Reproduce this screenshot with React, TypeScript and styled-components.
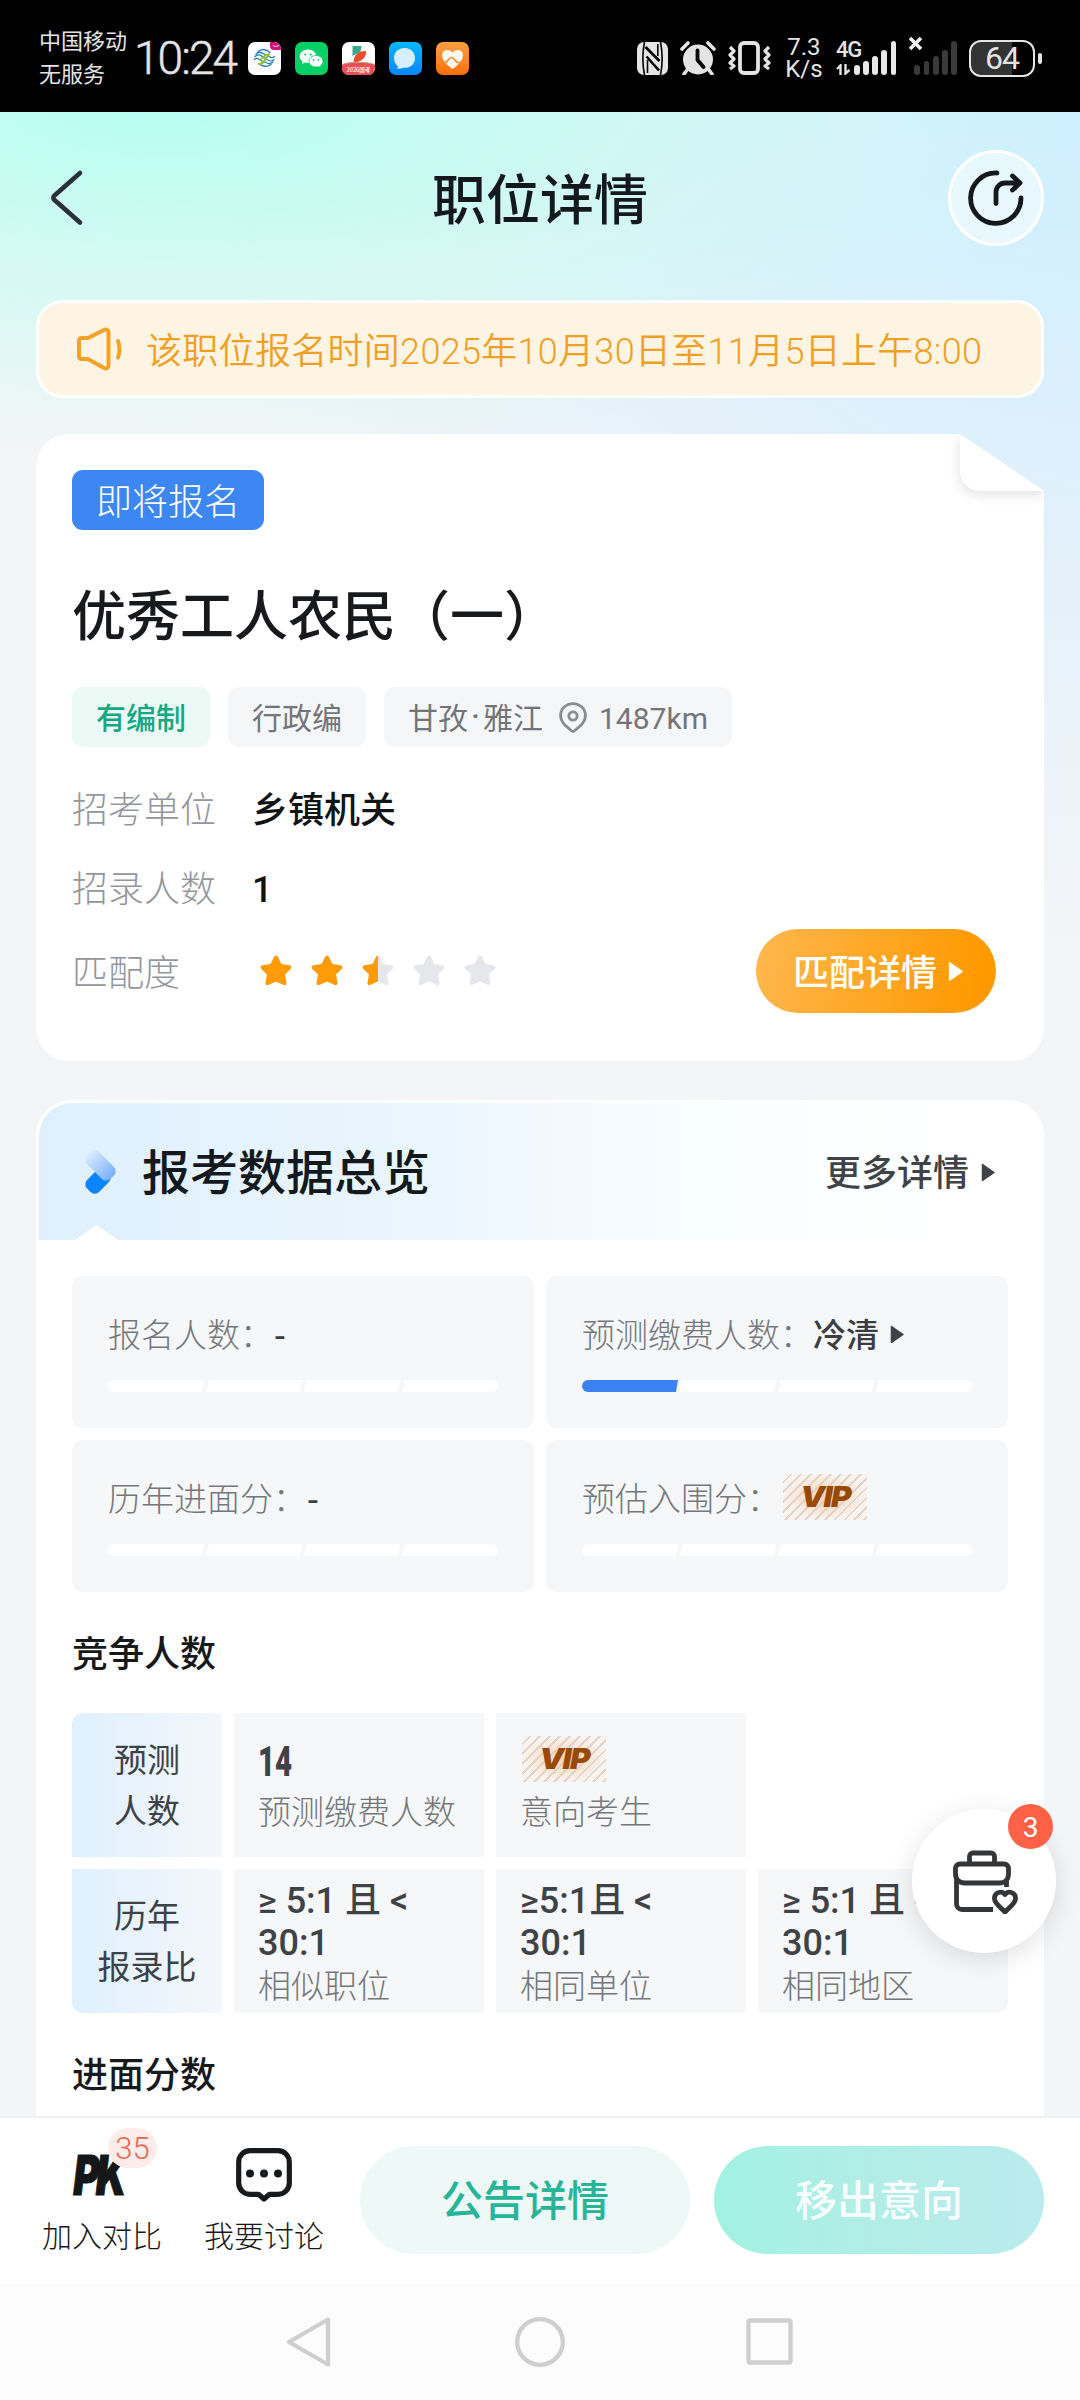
import React from 'react';
import styled, { createGlobalStyle, css } from 'styled-components';

const GlobalStyle = createGlobalStyle`
  * { box-sizing: border-box; }
  html, body { margin: 0; padding: 0; }
  body {
    font-family: 'Noto Sans CJK SC', 'Noto Sans', sans-serif;
    color: #17191c;
    -webkit-font-smoothing: antialiased;
  }
  svg { display: block; flex: none; }
`;

/* Latin letters, digits and signs inside Chinese text */
const Latin = styled.span`
  font-family: Roboto, 'Noto Sans CJK SC', sans-serif;
  line-height: 0;
`;

const Mixed = ({ children }: { children: string }) => (
  <span>
    {children.split(/([\x21-\x7e≥ ]+)/).map((part, i) =>
      i % 2 ? <Latin key={i}>{part}</Latin> : part,
    )}
  </span>
);

const Screen = styled.div`
  position: relative;
  width: 1080px;
  height: 2400px;
  display: flex;
  flex-direction: column;
  overflow: hidden;
  background: #f4f5f7;
`;

/* ---------- status bar ---------- */

const StatusBar = styled.header`
  flex: none;
  height: 112px;
  padding: 4px 38px 0 39px;
  display: flex;
  align-items: center;
  background: #000;
  color: #e4e4e4;
`;

const Carrier = styled.div`
  font-size: 22px;
  line-height: 33px;
  width: 88px;
  padding-bottom: 4px;
  white-space: nowrap;
`;

const Clock = styled.div`
  width: 103px;
  margin-left: 7px;
  font-family: Roboto, sans-serif;
  font-size: 46px;
  font-weight: 300;
  letter-spacing: -1.9px;
  line-height: 60px;
  white-space: nowrap;
  -webkit-text-stroke: 0.5px #e4e4e4;
`;

const AppIcons = styled.div`
  display: flex;
  gap: 14px;
  margin-left: 11px;
`;

const StatusIcons = styled.div`
  margin-left: auto;
  display: flex;
  align-items: center;
`;

const Spacer = styled.i`
  width: 12px;
`;

const Speed = styled.div`
  width: 36px;
  margin: 0 14px 0 15px;
  display: flex;
  flex-direction: column;
  align-items: center;
  font-family: Roboto, sans-serif;
  font-size: 24px;
  line-height: 22px;
  font-weight: 400;
  white-space: nowrap;
`;

const Network = styled.div`
  display: flex;
  flex-direction: column;
  width: 18px;
  height: 34px;
  font-family: Roboto, sans-serif;
  font-size: 22px;
  line-height: 18px;
  font-weight: 500;
  letter-spacing: -1.2px;
  white-space: nowrap;
  justify-content: space-between;
`;

const Bars = styled.div<{ $dim?: boolean }>`
  display: flex;
  align-items: flex-end;
  gap: 3.4px;
  height: 34px;
  opacity: ${(p) => (p.$dim ? 0.25 : 1)};
`;

const Bar = styled.i<{ $h: number }>`
  width: 5.8px;
  height: ${(p) => p.$h}px;
  border-radius: 3px;
  background: #e8e8e8;
`;

const Battery = styled.div`
  width: 66px;
  height: 37px;
  margin-left: 12px;
  border: 2.5px solid #e4e4e4;
  border-radius: 12px;
  display: flex;
  align-items: center;
  justify-content: center;
  font-family: Roboto, sans-serif;
  font-size: 32px;
  line-height: 30px;
  letter-spacing: -1px;
  background: linear-gradient(90deg, #333 66%, #000 66%);
`;

const BatteryNub = styled.i`
  width: 4px;
  height: 11px;
  margin-left: 3px;
  border-radius: 2px;
  background: #e4e4e4;
`;

/* ---------- scroll area ---------- */

const Content = styled.main`
  flex: none;
  height: 2004px;
  overflow: hidden;
  padding: 0 36px;
  background:
    radial-gradient(ellipse 950px 370px at 160px -20px, rgba(176, 255, 241, 0.95), rgba(200, 251, 241, 0.7) 50%, rgba(232, 248, 246, 0) 100%),
    radial-gradient(ellipse 900px 900px at 1080px -40px, rgba(203, 239, 255, 1), rgba(221, 239, 252, 0.8) 50%, rgba(244, 245, 247, 0) 100%),
    #f4f5f7;
`;

const TitleBar = styled.div`
  height: 188px;
  padding: 38px 0 54px;
  display: grid;
  grid-template-columns: 96px 1fr 96px;
  align-items: center;
`;

const BackButton = styled.button`
  border: 0;
  padding: 0 0 0 13px;
  background: none;
`;

const PageTitle = styled.h1`
  margin: 0;
  padding-bottom: 2px;
  text-align: center;
  font-size: 54px;
  line-height: 80px;
  font-weight: 500;
  color: #14191d;
  white-space: nowrap;
`;

const ShareButton = styled.button`
  width: 96px;
  height: 96px;
  padding: 0;
  border: 3px solid #fff;
  border-radius: 50%;
  background: rgba(255, 255, 255, 0.5);
  display: flex;
  align-items: center;
  justify-content: center;
`;

const Notice = styled.div`
  height: 98px;
  padding-left: 36px;
  display: flex;
  align-items: center;
  border: 3px solid #fff;
  border-radius: 27px;
  background: #fef4e3;
  color: #efa023;
  font-size: 36px;
  font-weight: 350;
`;

const NoticeText = styled.span`
  margin-left: 23px;
  padding-bottom: 3px;
  line-height: 50px;
  letter-spacing: 0.3px;
  white-space: nowrap;
`;

const JobCard = styled.section`
  position: relative;
  height: 627px;
  margin-top: 36px;
  padding: 36px 36px 0;
  border-radius: 33px;
  background: #fff;
  clip-path: polygon(0 0, calc(100% - 84px) 0, 100% 57px, 100% 100%, 0 100%);
`;

const Fold = styled.div`
  position: absolute;
  top: 0;
  right: 0;
  width: 84px;
  height: 57px;
  border-radius: 0 0 0 20px;
  background: #fff;
  box-shadow: -1px 5px 12px rgba(0, 0, 0, 0.1);
`;

const StatusTag = styled.div`
  width: 192px;
  height: 60px;
  border-radius: 11px;
  background: #3d87f3;
  color: #fff;
  font-size: 36px;
  font-weight: 300;
  line-height: 58px;
  text-align: center;
`;

const JobTitle = styled.h2`
  margin: 47px 0 38px;
  font-size: 54px;
  line-height: 72px;
  height: 72px;
  font-weight: 500;
  white-space: nowrap;
`;

const Tags = styled.div`
  display: flex;
  gap: 18px;
`;

const Tag = styled.div<{ $accent?: boolean }>`
  height: 60px;
  padding: 0 24px 3px;
  display: flex;
  align-items: center;
  border-radius: 11px;
  background: ${(p) => (p.$accent ? '#ecfaf6' : '#f5f6f8')};
  color: ${(p) => (p.$accent ? '#16a884' : '#727579')};
  font-size: 30px;
  font-weight: ${(p) => (p.$accent ? 500 : 400)};
  line-height: 56px;
  white-space: nowrap;
  svg { margin: 4px 12px 0 16px; }
`;

const Dot = styled.span`
  width: 15px;
  text-align: center;
  font-family: Roboto, sans-serif;
  font-weight: 500;
`;

const Fields = styled.dl`
  margin: 22px 0 0;
`;

const Field = styled.div<{ $last?: boolean }>`
  height: ${(p) => (p.$last ? 84 : 79)}px;
  ${(p) => p.$last && css`margin-top: 2px;`}
  display: flex;
  align-items: center;
`;

const FieldName = styled.dt`
  width: 180px;
  font-size: 36px;
  line-height: 50px;
  font-weight: 300;
  color: #94969d;
  padding-bottom: 3px;
`;

const FieldValue = styled.dd`
  margin: 0;
  font-size: 36px;
  line-height: 50px;
  font-weight: 500;
  color: #111315;
  padding-bottom: 3px;
`;

const Stars = styled.dd`
  margin: 0;
  display: flex;
  gap: 15px;
  padding-left: 6px;
  padding-bottom: 2px;
`;

const MatchButton = styled.button`
  width: 240px;
  height: 84px;
  margin: 0 12px 0 auto;
  padding: 0 0 2px 37px;
  display: flex;
  align-items: center;
  gap: 11px;
  border: 0;
  border-radius: 42px;
  background: linear-gradient(100deg, #ffb74e 0%, #ff9900 92%);
  color: #fff;
  font: inherit;
  font-size: 36px;
  font-weight: 500;
  white-space: nowrap;
  svg { margin-top: 2px; }
`;

const DataCard = styled.section`
  height: 1100px;
  margin-top: 39px;
  border: 3px solid #fff;
  border-radius: 36px;
  background: #fff;
  overflow: hidden;
`;

const DataHeader = styled.div`
  position: relative;
  height: 137px;
  padding: 0 46px 0 41px;
  display: flex;
  align-items: center;
  background: linear-gradient(90deg, #dff0fd 0%, #e9f5fe 35%, #f2f9ff 52%, #fafeff 70%, #fff 92%);
`;

const Notch = styled.i`
  position: absolute;
  left: 36px;
  bottom: 0;
  width: 43px;
  height: 15px;
  background: #fff;
  clip-path: polygon(50% 0, 100% 100%, 0 100%);
`;

const DataTitle = styled.h3`
  flex: 1;
  margin: 0 0 0 22px;
  font-size: 48px;
  line-height: 70px;
  font-weight: 500;
  padding-bottom: 5px;
  color: #14191d;
`;

const More = styled.a`
  display: flex;
  align-items: center;
  gap: 12px;
  font-size: 36px;
  line-height: 50px;
  font-weight: 500;
  color: #3f4347;
  padding-bottom: 3px;
  svg { margin-top: 5px; }
`;

const DataBody = styled.div`
  padding: 36px 33px 0;
`;

const StatGrid = styled.div`
  display: grid;
  grid-template-columns: 462px 462px;
  grid-auto-rows: 152px;
  gap: 12px;
`;

const Stat = styled.div`
  padding: 32px 36px 0;
  border-radius: 11px;
  background: #f6f7f9;
`;

const StatLine = styled.div`
  display: flex;
  align-items: center;
  height: 50px;
  font-size: 33px;
  line-height: 48px;
  font-weight: 300;
  color: #75777b;
  white-space: nowrap;
  svg { margin: 3px 0 0 11px; }
`;

const StatValue = styled.b<{ $empty?: boolean }>`
  font-weight: 500;
  color: #3a3e42;
  ${(p) => p.$empty && css`margin-left: 1px;`}
`;

const Progress = styled.div`
  display: grid;
  grid-template-columns: repeat(4, 96px);
  gap: 2px;
  height: 12px;
  margin-top: 22px;
  border-radius: 6px;
  overflow: hidden;
`;

const Segment = styled.i<{ $on?: boolean }>`
  background: ${(p) => (p.$on ? '#3c82f5' : '#fff')};
  clip-path: polygon(3px 0, 100% 0, calc(100% - 2px) 100%, 0 100%);
  &:first-child { clip-path: polygon(0 0, 100% 0, calc(100% - 2px) 100%, 0 100%); }
  &:last-child { clip-path: polygon(3px 0, 100% 0, 100% 100%, 0 100%); }
`;

const VipMark = styled.div<{ $indent?: number }>`
  width: 84px;
  height: 46px;
  margin-left: ${(p) => p.$indent ?? 0}px;
  display: flex;
  align-items: center;
  justify-content: center;
  background:
    radial-gradient(ellipse at center, rgba(243, 200, 165, 0.75), rgba(250, 238, 228, 0.15) 70%),
    repeating-linear-gradient(135deg, #f8f5f3 0 5px, #e3d0c3 5px 7px);
`;

const VipText = styled.span`
  font-family: Inter, Roboto, sans-serif;
  font-size: 29px;
  line-height: 30px;
  font-weight: 900;
  font-style: italic;
  letter-spacing: -1.5px;
  color: #984a05;
  transform: scaleX(1.08);
`;

const SectionTitle = styled.h4`
  margin: 34px 0 33px;
  height: 54px;
  font-size: 36px;
  line-height: 50px;
  font-weight: 500;
`;

const CompareGrid = styled.div`
  display: grid;
  grid-template-columns: 150px 250px 250px 250px;
  grid-auto-rows: 144px;
  gap: 12px;
  border-radius: 11px;
  overflow: hidden;
`;

const RowHead = styled.div`
  display: flex;
  flex-direction: column;
  align-items: center;
  justify-content: center;
  padding-bottom: 3px;
  font-size: 33px;
  line-height: 51px;
  color: #3d4247;
  background: linear-gradient(90deg, #dff0fe 0%, #f4f7fb 100%);
`;

const Cell = styled.div`
  display: flex;
  flex-direction: column;
  justify-content: center;
  padding: 0 10px 0 24px;
  background: #f6f7f9;
`;

const CellNumber = styled.div`
  height: 46px;
  margin-bottom: 4px;
  font-family: Roboto, sans-serif;
  font-size: 42px;
  line-height: 52px;
  font-weight: 900;
  color: #3f4347;
  transform: scaleX(0.7);
  transform-origin: left;
`;

const CellRatio = styled.div`
  margin-top: 2px;
  font-size: 36px;
  line-height: 42px;
  font-weight: 500;
  color: #3f4347;
  white-space: nowrap;
`;

const CellLabel = styled.div<{ $raised?: boolean }>`
  font-size: 33px;
  line-height: 48px;
  font-weight: 300;
  color: #75777b;
  white-space: nowrap;
  ${(p) => p.$raised && css`margin-top: 4px;`}
`;

/* ---------- floating button ---------- */

const Fab = styled.button`
  position: absolute;
  left: 912px;
  top: 1809px;
  width: 144px;
  height: 144px;
  padding: 2px 0 0 3px;
  border: 0;
  border-radius: 50%;
  background: #fff;
  box-shadow: 0 6px 28px rgba(0, 0, 0, 0.12);
  display: flex;
  align-items: center;
  justify-content: center;
`;

const FabBadge = styled.span`
  position: absolute;
  top: -5px;
  left: 96px;
  width: 45px;
  height: 45px;
  border-radius: 50%;
  background: #ff6146;
  color: #fff;
  font: 400 28px/47px Roboto, sans-serif;
  text-align: center;
`;

/* ---------- bottom ---------- */

const ActionBar = styled.footer`
  flex: none;
  height: 168px;
  padding: 28px 36px 0 42px;
  display: flex;
  align-items: flex-start;
  border-top: 2px solid #f0f1f3;
  background: #fff;
`;

const Action = styled.div`
  position: relative;
  width: 120px;
  margin-right: 42px;
  display: flex;
  flex-direction: column;
  align-items: center;
  font-size: 30px;
  font-weight: 300;
`;

const ActionIcon = styled.div`
  height: 58px;
  width: 100%;
  display: flex;
  align-items: center;
  justify-content: center;
`;

const ActionLabel = styled.span`
  margin-top: 10px;
  line-height: 40px;
  white-space: nowrap;
`;

const PkMark = styled.span`
  font-family: Inter, Roboto, sans-serif;
  font-size: 55px;
  line-height: 58px;
  font-weight: 900;
  font-style: italic;
  letter-spacing: -5px;
  color: #141617;
  transform: translateX(-4px) scaleX(0.73);
  -webkit-text-stroke: 1px #141617;
`;

const PkBadge = styled.span`
  position: absolute;
  left: 66px;
  top: -18px;
  width: 49px;
  height: 40px;
  border-radius: 20px;
  background: #fdecea;
  color: #e5694f;
  font-family: Roboto, sans-serif;
  font-size: 31px;
  line-height: 42px;
  text-align: center;
`;

const PillButton = styled.button<{ $primary?: boolean }>`
  width: 330px;
  height: 108px;
  margin-left: ${(p) => (p.$primary ? 24 : -6)}px;
  padding: 0 0 5px;
  border: 0;
  border-radius: 54px;
  font: inherit;
  font-size: 42px;
  font-weight: 500;
  ${(p) =>
    p.$primary
      ? css`
          color: rgba(255, 255, 255, 0.92);
          background: linear-gradient(90deg, #a2f1e3, #b2ede6 50%, #bbebee);
        `
      : css`
          color: #27b598;
          background: #eef9f7;
        `}
`;

const NavBar = styled.nav`
  flex: 1;
  display: flex;
  align-items: center;
  justify-content: center;
  gap: 180px;
  background: #fcfcfc;
`;

/* ---------- icons ---------- */

const Triangle = ({ color, w = 14, h = 19 }: { color: string; w?: number; h?: number }) => (
  <svg width={w} height={h} viewBox="0 0 14 19">
    <path d="M1.5 1.5v16L13 9.5z" fill={color} stroke={color} strokeWidth="1.5" strokeLinejoin="round" />
  </svg>
);

const STAR =
  'M17 1.500c1 0 1.600.8 2 1.600l3.400 6.900 7.900 1.200c2.200.4 2.900 2.200 1.400 3.800l-5.700 5.500 1.400 7.700c.4 2.200-1 3.600-3 2.600L17 27.500l-7.400 3.300c-2 1-3.400-.4-3-2.600L8 20.500 2.300 15c-1.500-1.600-.8-3.400 1.400-3.800l7.900-1.200L15 3.100c.4-.8 1-1.600 2-1.600z';

const Star = ({ fill }: { fill: number }) => (
  <svg width="36" height="34" viewBox="-1 -1 36 34">
    <path d={STAR} fill="#e6e7ea" />
    {fill > 0 && <path d={STAR} fill="#ff9b06" style={{ clipPath: `inset(0 ${100 - fill * 100}% 0 0)` }} />}
  </svg>
);

const MobileApp = () => (
  <svg width="33" height="33" viewBox="0 0 33 33">
    <rect width="33" height="33" rx="7" fill="#fff" />
    <path d="M22 0h4a7 7 0 0 1 7 7v1h-7a4 4 0 0 1-4-4z" fill="#d3107c" />
    <path d="M25 3c1 2 4 2 6 0" stroke="#fff" fill="none" />
    <g fill="none" strokeWidth="1.3" strokeLinecap="round">
      <path d="M10 9.500c4-3 9-2 12 1M8 12c4-4 7 0 10 1M7 14.500c4-4 7 0 9 1.500M6.500 17.500c3-3 5 0 7 1.500" stroke="#1f7fb6" />
      <path d="M23 22.500c-4 3-9 2-12-1M25 20c-4 4-7 0-10-1M26 17.500c-4 4-7 0-9-1.500M26.500 14.500c-3 3-5 0-7-1.500" stroke="#1f7fb6" />
      <path d="M11 22c5 1 5-5 9-8" stroke="#8cc21f" strokeWidth="2" />
      <path d="M12.500 17.500c3-1 4-6 9-5.500" stroke="#8cc21f" strokeWidth="1.500" />
    </g>
  </svg>
);

const WeChatApp = () => (
  <svg width="33" height="33" viewBox="0 0 33 33">
    <rect width="33" height="33" rx="7" fill="#06cf63" />
    <path d="M13 7.500c-4.800 0-8.300 3-8.300 6.800 0 2.100 1.100 3.900 2.900 5.200l-.8 2.600 3.100-1.600c1 .3 2 .5 3.100.5 4.800 0 8.400-3 8.400-6.700s-3.600-6.800-8.400-6.800z" fill="#fff" />
    <path d="M21 13.500c-4 0-7 2.600-7 5.800s3 5.700 7 5.700c.9 0 1.700-.1 2.500-.4l2.600 1.400-.7-2.200c1.600-1.100 2.600-2.700 2.600-4.500 0-3.200-3-5.800-7-5.800z" fill="#fff" stroke="#06cf63" strokeWidth="0.800" />
    <g fill="#06cf63">
      <circle cx="10.300" cy="12.500" r="1.100" /><circle cx="15.800" cy="12.500" r="1.100" />
      <circle cx="18.700" cy="17.800" r="0.900" /><circle cx="23.300" cy="17.800" r="0.900" />
    </g>
  </svg>
);

const ExamApp = () => (
  <svg width="33" height="33" viewBox="0 0 33 33">
    <defs><clipPath id="examClip"><rect width="33" height="33" rx="7" /></clipPath></defs>
    <g clipPath="url(#examClip)">
      <rect width="33" height="33" fill="#fff" />
      <path d="M10.500 4h9l-1 6-8 4z" fill="#3aa98d" />
      <path d="M24 9c.6 6-4 11-12.500 12C11.500 13 16 9 24 9z" fill="#ef4a2b" />
      <path d="M0 22.500c8-3 24-3 33 0V33H0z" fill="#ee4d55" />
      <path d="M0 22.500c8-3 24-3 33 0" stroke="#b9a693" fill="none" />
      <text x="16.500" y="30.300" textAnchor="middle" fontSize="5.600" fontWeight="500" fill="#fff">2026国考</text>
    </g>
  </svg>
);

const MessageApp = () => (
  <svg width="33" height="33" viewBox="0 0 33 33">
    <defs><linearGradient id="msg" x1="0" y1="0" x2="0" y2="1"><stop stopColor="#06b7ff" /><stop offset="1" stopColor="#0a86ff" /></linearGradient></defs>
    <rect width="33" height="33" rx="7" fill="url(#msg)" />
    <path d="M15.500 6C9.500 6 5 10.300 5 16c0 3.600 1.600 6.400 4 8.200l-1 2.600c3 .3 5-.6 6.500-1C21.500 26.500 26 22 26 16c0-5.700-4.500-10-10.500-10z" fill="#d6eeff" />
  </svg>
);

const HealthApp = () => (
  <svg width="33" height="33" viewBox="0 0 33 33">
    <defs><linearGradient id="hl" x1="0" y1="0" x2="0" y2="1"><stop stopColor="#ff9f43" /><stop offset="1" stopColor="#fb6f0a" /></linearGradient></defs>
    <rect width="33" height="33" rx="7" fill="url(#hl)" />
    <path d="M16.500 10.500C14 6.500 6 7 6 13.500c0 5.500 6 10 10.500 13.500C21 23.500 27 19 27 13.500 27 7 19 6.500 16.500 10.500z" fill="#fff8ee" />
    <path d="M0 20.500h9c3 0 3.500-5 6.500-5s3.500 5 6.500 5h11" fill="none" stroke="#f98a2a" strokeWidth="1.600" />
  </svg>
);

const Nfc = () => (
  <svg width="31" height="33" viewBox="0 0 31 33">
    <rect width="31" height="33" rx="7" fill="#e4e4e4" />
    <path d="M7.500 0C5.500 10 5.500 23 7.500 33M23.500 0c2 10 2 23 0 33" stroke="#000" strokeWidth="1.600" fill="none" />
    <path d="M8.500 5l14 14M9.500 14.500l12.500 14" stroke="#000" strokeWidth="2.600" />
    <path d="M10.500 18v13M20.800 2v12" stroke="#000" strokeWidth="1.600" />
  </svg>
);

const Alarm = () => (
  <svg width="36" height="34" viewBox="0 0 36 34">
    <circle cx="18" cy="18.500" r="15" fill="#e4e4e4" />
    <path d="M2 8l6-6M34 8l-6-6M7 29l-3 4M29 29l3 4" stroke="#e4e4e4" strokeWidth="3.600" strokeLinecap="round" />
    <path d="M17.500 9.500v9.500l6 7" stroke="#000" strokeWidth="3.800" fill="none" strokeLinecap="round" strokeLinejoin="round" />
  </svg>
);

const Vibrate = () => (
  <svg width="43" height="34" viewBox="0 0 43 34">
    <rect x="12" y="2" width="18" height="30" rx="4" fill="none" stroke="#e4e4e4" strokeWidth="3.800" />
    <path d="M2 6l4 4-4 4 4 4-4 4 4 3-4 3M41 6l-4 4 4 4-4 4 4 4-4 3 4 3" fill="none" stroke="#e4e4e4" strokeWidth="3.200" strokeLinejoin="round" />
  </svg>
);

const DataArrows = () => (
  <svg width="15" height="11" viewBox="0 0 15 11">
    <path d="M4.500 11V1.500L1 5M9.500 0v9.500L13.500 6" fill="none" stroke="#e4e4e4" strokeWidth="2.400" />
  </svg>
);

const NoSim = () => (
  <svg width="15" height="15" viewBox="0 0 15 15">
    <path d="M2 2l11 11M13 2L2 13" stroke="#f0f0f0" strokeWidth="3.600" />
  </svg>
);

const NoSimSlot = styled.div`
  align-self: flex-start;
  width: 6px;
  margin-left: 12px;
`;

const BackIcon = () => (
  <svg width="36" height="60" viewBox="0 0 36 60">
    <path d="M31 5L5.500 27.500c-1.500 1.400-1.500 3.200 0 4.600L31 54.500" fill="none" stroke="#2b3034" strokeWidth="4.600" strokeLinecap="round" strokeLinejoin="round" />
  </svg>
);

const ShareIcon = () => (
  <svg width="60" height="60" viewBox="0 0 60 60">
    <g fill="none" stroke="#14191d" strokeWidth="4.800" strokeLinecap="round" strokeLinejoin="round">
      <path d="M31 5A25.200 25.200 0 1 0 55 30" />
      <path d="M30 35.500V24a9 9 0 0 1 9-9h14M46.500 8l7.500 7-7.500 7" />
    </g>
  </svg>
);

const Speaker = () => (
  <svg width="48" height="46" viewBox="0 0 48 46">
    <g fill="none" stroke="#f5a128" strokeWidth="4" strokeLinejoin="round" strokeLinecap="round">
      <path d="M4 14.500A2.500 2.500 0 0 1 6.500 12H13L29 4c2.500-1 4.500 0 4.500 2.500v33c0 2.500-2 3.500-4.500 2.500L13 33H6.500A2.500 2.500 0 0 1 4 30.500z" />
      <path d="M43 15c2 4.500 2 12 0 16.500" />
    </g>
  </svg>
);

const Pin = () => (
  <svg width="28" height="31" viewBox="0 0 28 31">
    <path d="M14 1.600C7 1.600 1.600 6.900 1.600 13.500c0 4.200 2.200 7.600 5.200 10.400l5.700 4.900a2.300 2.300 0 0 0 3 0l5.700-4.900c3-2.800 5.200-6.200 5.200-10.400C26.400 6.900 21 1.600 14 1.600z" fill="none" stroke="#898c92" strokeWidth="2.800" />
    <circle cx="14" cy="14" r="4.200" fill="none" stroke="#898c92" strokeWidth="2.800" />
  </svg>
);

const ChevronMark = () => (
  <svg width="40" height="52" viewBox="0 0 40 52">
    <defs>
      <linearGradient id="cm" x1="0" y1="0" x2="1" y2="0"><stop stopColor="#dcecfe" /><stop offset="1" stopColor="#78affa" /></linearGradient>
    </defs>
    <rect x="5" y="26.500" width="26" height="17" rx="6" transform="rotate(-45 18 35)" fill="#0a84ff" />
    <rect x="4" y="11" width="33" height="17" rx="6" transform="rotate(45 20.500 19.500)" fill="url(#cm)" />
  </svg>
);

const BriefcaseHeart = () => (
  <svg width="66" height="64" viewBox="0 0 66 64">
    <g fill="none" stroke="#333537" strokeWidth="4.800" strokeLinejoin="round">
      <path d="M16.500 13V6.500A3.500 3.500 0 0 1 20 3h18a3.500 3.500 0 0 1 3.500 3.500V13" />
      <path d="M7 14h44a4.500 4.500 0 0 1 4.500 4.500V24c0 5.500-3.500 9-9 9h-35c-5.500 0-9-3.500-9-9v-5.500A4.500 4.500 0 0 1 7 14z" />
      <path d="M3.500 28v26a5.500 5.500 0 0 0 5.500 5.500h31M53.500 31v6" />
      <path d="M52 44.500c-3.500-4.500-11-2-10.500 4.500.4 4.500 6 8.500 10.500 13 4.500-4.500 10.100-8.500 10.500-13 .5-6.500-7-9-10.500-4.500z" />
    </g>
  </svg>
);

const ChatIcon = () => (
  <svg width="56" height="54" viewBox="0 0 56 54">
    <path d="M14 2.700h28A11.300 11.300 0 0 1 53.300 14v21A11.300 11.300 0 0 1 42 46.300h-8.500L28 51l-5.500-4.700H14A11.300 11.300 0 0 1 2.700 35V14A11.300 11.300 0 0 1 14 2.700z" fill="none" stroke="#171a1c" strokeWidth="5.200" strokeLinejoin="round" />
    <circle cx="14" cy="25.500" r="4" fill="#171a1c" /><circle cx="28" cy="25.500" r="4" fill="#171a1c" /><circle cx="42" cy="25.500" r="4" fill="#171a1c" />
  </svg>
);

const NavIcon = ({ children }: { children: React.ReactNode }) => (
  <svg width="50" height="52" viewBox="0 0 50 52" fill="none" stroke="#cfcfcf" strokeWidth="4.300" strokeLinejoin="round">
    {children}
  </svg>
);

/* ---------- data ---------- */

const stats = [
  { label: '报名人数', value: '-' },
  { label: '预测缴费人数', value: '冷清', level: 1, link: true },
  { label: '历年进面分', value: '-' },
  { label: '预估入围分', vip: true },
];

const Signal = ({ dim }: { dim?: boolean }) => (
  <Bars $dim={dim}>
    {[10, 14, 19, 25, 34].map((h) => <Bar key={h} $h={h} />)}
  </Bars>
);

const Vip = ({ indent }: { indent?: number }) => (
  <VipMark $indent={indent}><VipText>VIP</VipText></VipMark>
);

const RatioCell = ({ lines, label }: { lines: string[]; label: string }) => (
  <Cell>
    <CellRatio>
      {lines.map((line) => <div key={line}><Mixed>{line}</Mixed></div>)}
    </CellRatio>
    <CellLabel>{label}</CellLabel>
  </Cell>
);

export default function App() {
  return (
    <Screen>
      <GlobalStyle />
      <StatusBar>
        <Carrier>中国移动<br />无服务</Carrier>
        <Clock>10:24</Clock>
        <AppIcons>
          <MobileApp /><WeChatApp /><ExamApp /><MessageApp /><HealthApp />
        </AppIcons>
        <StatusIcons>
          <Nfc />
          <Spacer />
          <Alarm />
          <Spacer />
          <Vibrate />
          <Speed><span>7.3</span><span>K/s</span></Speed>
          <Network>4G<DataArrows /></Network>
          <Signal />
          <NoSimSlot><NoSim /></NoSimSlot>
          <Signal dim />
          <Battery>64</Battery>
          <BatteryNub />
        </StatusIcons>
      </StatusBar>

      <Content>
        <TitleBar>
          <BackButton><BackIcon /></BackButton>
          <PageTitle>职位详情</PageTitle>
          <ShareButton><ShareIcon /></ShareButton>
        </TitleBar>

        <Notice>
          <Speaker />
          <NoticeText><Mixed>该职位报名时间2025年10月30日至11月5日上午8:00</Mixed></NoticeText>
        </Notice>

        <JobCard>
          <Fold />
          <StatusTag>即将报名</StatusTag>
          <JobTitle>优秀工人农民（一）</JobTitle>
          <Tags>
            <Tag $accent>有编制</Tag>
            <Tag>行政编</Tag>
            <Tag>甘孜<Dot>·</Dot>雅江<Pin /><Mixed>1487km</Mixed></Tag>
          </Tags>
          <Fields>
            <Field><FieldName>招考单位</FieldName><FieldValue>乡镇机关</FieldValue></Field>
            <Field><FieldName>招录人数</FieldName><FieldValue><Mixed>1</Mixed></FieldValue></Field>
            <Field $last>
              <FieldName>匹配度</FieldName>
              <Stars>{[1, 1, 0.5, 0, 0].map((f, i) => <Star key={i} fill={f} />)}</Stars>
              <MatchButton>匹配详情<Triangle color="#fff" w={15} h={21} /></MatchButton>
            </Field>
          </Fields>
        </JobCard>

        <DataCard>
          <DataHeader>
            <ChevronMark />
            <DataTitle>报考数据总览</DataTitle>
            <More>更多详情<Triangle color="#3f4347" /></More>
            <Notch />
          </DataHeader>
          <DataBody>
            <StatGrid>
              {stats.map((s) => (
                <Stat key={s.label}>
                  <StatLine>
                    {s.label}：
                    {s.value && <StatValue $empty={s.value === '-'}>{s.value}</StatValue>}
                    {s.link && <Triangle color="#3f4347" />}
                    {s.vip && <Vip indent={3} />}
                  </StatLine>
                  <Progress>
                    {[0, 1, 2, 3].map((i) => <Segment key={i} $on={i < (s.level ?? 0)} />)}
                  </Progress>
                </Stat>
              ))}
            </StatGrid>

            <SectionTitle>竞争人数</SectionTitle>
            <CompareGrid>
              <RowHead><span>预测</span><span>人数</span></RowHead>
              <Cell><CellNumber>14</CellNumber><CellLabel>预测缴费人数</CellLabel></Cell>
              <Cell><Vip indent={2} /><CellLabel $raised>意向考生</CellLabel></Cell>
              <span />
              <RowHead><span>历年</span><span>报录比</span></RowHead>
              <RatioCell lines={['≥ 5:1 且 <', '30:1']} label="相似职位" />
              <RatioCell lines={['≥5:1且 <', '30:1']} label="相同单位" />
              <RatioCell lines={['≥ 5:1 且 <', '30:1']} label="相同地区" />
            </CompareGrid>
            <SectionTitle>进面分数</SectionTitle>
          </DataBody>
        </DataCard>
      </Content>

      <Fab>
        <BriefcaseHeart />
        <FabBadge>3</FabBadge>
      </Fab>

      <ActionBar>
        <Action>
          <ActionIcon><PkMark>PK</PkMark></ActionIcon>
          <PkBadge>35</PkBadge>
          <ActionLabel>加入对比</ActionLabel>
        </Action>
        <Action>
          <ActionIcon><ChatIcon /></ActionIcon>
          <ActionLabel>我要讨论</ActionLabel>
        </Action>
        <PillButton>公告详情</PillButton>
        <PillButton $primary>移出意向</PillButton>
      </ActionBar>

      <NavBar>
        <NavIcon><path d="M43 3.500v45L4 26z" /></NavIcon>
        <NavIcon><circle cx="25" cy="26" r="22.800" /></NavIcon>
        <NavIcon><rect x="3.500" y="4.500" width="42" height="42" rx="1.500" /></NavIcon>
      </NavBar>
    </Screen>
  );
}
